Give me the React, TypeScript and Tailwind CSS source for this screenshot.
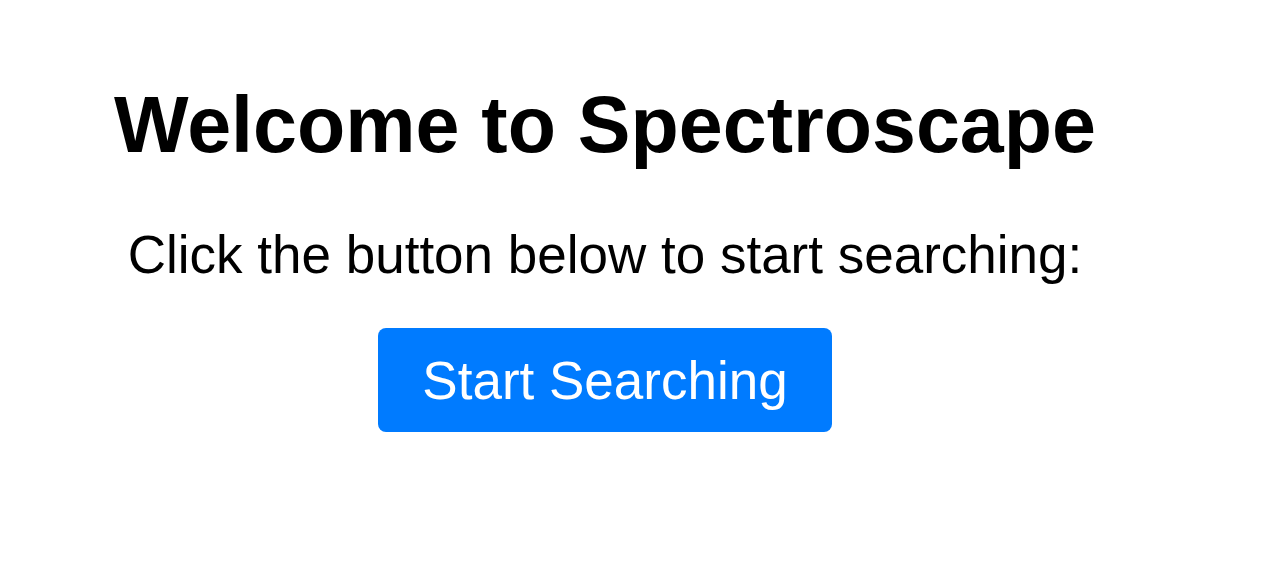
export default function App() {
  return (
    <div className="min-h-[563px] bg-white font-['Liberation_Sans',Arial,sans-serif] text-black">
      <div className="w-[1210px] flex flex-col items-center text-center pt-[85px]">
        <h1 className="text-[79px] leading-none font-bold">Welcome to Spectroscape</h1>
        <p className="mt-[64px] text-[53px] leading-none">Click the button below to start searching:</p>
        <button className="mt-[47px] rounded-lg bg-[#007bff] px-[44px] pt-[26px] pb-[25px] text-[53px] leading-none text-white">
          Start Searching
        </button>
      </div>
    </div>
  )
}
